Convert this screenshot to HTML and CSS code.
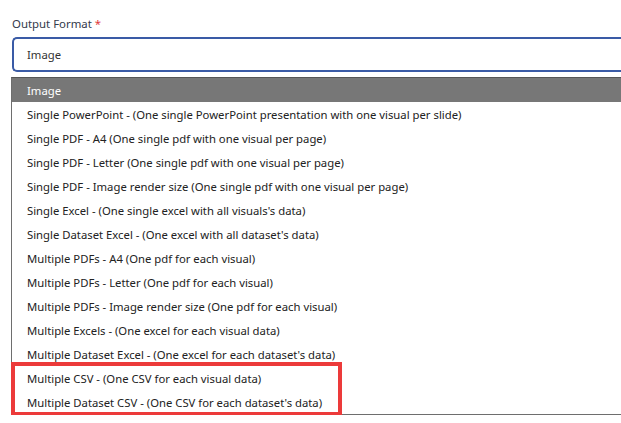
FILE: index.html
```html
<!DOCTYPE html>
<html lang="en">
<head>
<meta charset="utf-8">
<title>Output Format</title>
<link rel="stylesheet" href="styles.css">
</head>
<body>
<div class="page">
  <label class="field-label">Output Format <span class="req">*</span></label>
  <div class="select-box">Image</div>
  <div class="listbox">
    <div class="option selected">Image</div>
    <div class="option">Single PowerPoint - (One single PowerPoint presentation with one visual per slide)</div>
    <div class="option">Single PDF - A4 (One single pdf with one visual per page)</div>
    <div class="option">Single PDF - Letter (One single pdf with one visual per page)</div>
    <div class="option">Single PDF - Image render size (One single pdf with one visual per page)</div>
    <div class="option">Single Excel - (One single excel with all visuals's data)</div>
    <div class="option">Single Dataset Excel - (One excel with all dataset's data)</div>
    <div class="option">Multiple PDFs - A4 (One pdf for each visual)</div>
    <div class="option">Multiple PDFs - Letter (One pdf for each visual)</div>
    <div class="option">Multiple PDFs - Image render size (One pdf for each visual)</div>
    <div class="option">Multiple Excels - (One excel for each visual data)</div>
    <div class="option">Multiple Dataset Excel - (One excel for each dataset's data)</div>
    <div class="option">Multiple CSV - (One CSV for each visual data)</div>
    <div class="option">Multiple Dataset CSV - (One CSV for each dataset's data)</div>
    <div class="callout"></div>
  </div>
</div>
</body>
</html>
```

FILE: styles.css
```css
html, body {
  margin: 0;
  padding: 0;
  background: #fff;
  overflow: hidden;
}

.page {
  padding: 15px 0 0 12px;
  font-family: "Noto Sans", "Open Sans", sans-serif;
}

.field-label {
  display: block;
  font-size: 11.4px;
  line-height: 17px;
  color: #333a4a;
}

.req {
  color: #e03b3b;
}

.select-box {
  box-sizing: border-box;
  margin-top: 5px;
  height: 35px;
  border: 2px solid #3a5ba6;
  border-right: none;
  border-radius: 5px 0 0 5px;
  padding-left: 13px;
  display: flex;
  align-items: center;
  font-size: 11.3px;
  color: #333;
}

.listbox {
  position: relative;
  margin: 5px 0 0 -1px;
  border: 1px solid #6e6e6e;
  border-right: none;
  border-top-color: #555;
}

.option {
  height: 24px;
  line-height: 26px;
  padding-left: 15px;
  font-size: 11.3px;
  color: #222;
  white-space: nowrap;
  overflow: hidden;
}

.option.selected {
  background: #777;
  color: #fff;
}

/* highlight frame around the CSV options */
.callout {
  position: absolute;
  left: -1px;
  top: 284px;
  width: 331px;
  height: 54px;
  box-sizing: border-box;
  border: 4px solid #ec3a3a;
}
```
